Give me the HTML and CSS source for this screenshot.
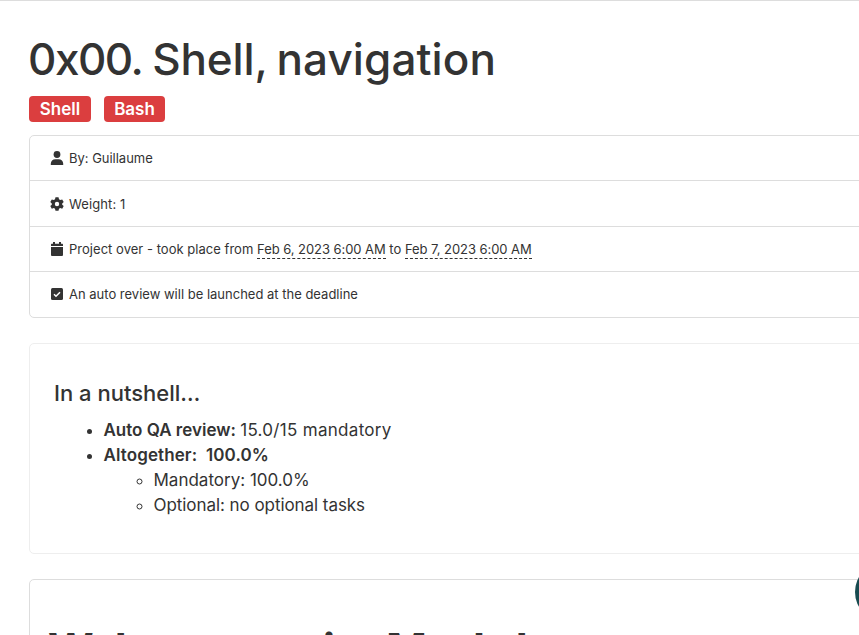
FILE: index.html
```html
<!DOCTYPE html>
<html lang="en">
<head>
<meta charset="utf-8">
<title>0x00. Shell, navigation</title>
<link rel="stylesheet" href="styles.css">
</head>
<body>
<main class="page">
  <h1 class="title"><span class="t1">0x00.</span> <span class="t2">Shell,</span> <span class="t3">navigation</span></h1>
  <div class="tags"><span class="tag tag-shell">Shell</span><span class="tag tag-bash">Bash</span></div>
  <ul class="meta">
    <li><svg viewBox="0 0 14 14"><circle cx="7" cy="3.5" r="3.4"/><path d="M.8 14v-1.200C.8 10 2.600 8.200 5.500 8.200h3c2.900 0 4.700 1.800 4.700 4.600V14z"/></svg><span class="m1">By: Guillaume</span></li>
    <li class="lower"><svg viewBox="0 0 14 14"><path fill-rule="evenodd" d="M5.500.3h3l.5 2 1.200.7 2-.6 1.500 2.600-1.500 1.400v1.300l1.500 1.400-1.500 2.600-2-.6-1.200.7-.5 2h-3l-.5-2-1.200-.7-2 .6L.3 9.100l1.500-1.400V6.400L.3 5l1.500-2.600 2 .6L5 2.300zM7 4.800a2.200 2.200 0 1 0 0 4.400 2.200 2.200 0 0 0 0-4.400z"/></svg><span class="m2">Weight: 1</span></li>
    <li><svg viewBox="0 0 14 14"><path d="M3 0h2v1.700h4V0h2v1.700h1c.7 0 1 .4 1 1V4H1V2.700c0-.6.300-1 1-1h1zM1 5h12v7.700c0 .7-.5 1.300-1.200 1.300H2.200C1.500 14 1 13.400 1 12.700z"/></svg><span class="m3">Project over - took place from <span class="date">Feb 6, 2023 6:00 AM</span> to <span class="date">Feb 7, 2023 6:00 AM</span></span></li>
    <li><svg viewBox="0 0 14 14"><rect x="1" y="0" width="12" height="12" rx="1.500"/><path class="tick" d="M4 6.200l2 2 4-4"/></svg><span class="m4">An auto review will be launched at the deadline</span></li>
  </ul>
  <section class="card summary">
    <h2>In a nutshell…</h2>
    <ul>
      <li><strong>Auto QA review:</strong> <span class="s2">15.0/15 mandatory</span></li>
      <li><strong class="s3">Altogether:&nbsp; 100.0%</strong>
        <ul>
          <li>Mandatory: 100.0%</li>
          <li><span class="s5">Optional: no optional tasks</span></li>
        </ul>
      </li>
    </ul>
  </section>
  <section class="card concepts"><h1><span class="c1">Welcome onsite</span> <span class="c2">Module</span></h1></section>
</main>
<div class="bubble"></div>
</body>
</html>
```
FILE: styles.css
```css
* { box-sizing: border-box; }
html, body { height: 100%; overflow: hidden; }
body { margin: 0; background: #fff; color: #333; font: 17px/25px Inter, "Liberation Sans", sans-serif; border-top: 1px solid #ddd; }
.page { width: 100%; height: 634px; overflow: hidden; padding: 33px 0 0 29px; }
.title { margin: 0 0 0 -1px; font-size: 44px; line-height: 50px; font-weight: 500; white-space: nowrap; }
.t1 { letter-spacing: -1.5px; }
.t2 { letter-spacing: -.1px; margin-left: -2px; }
.t3 { letter-spacing: .1px; margin-left: -3px; }
.tags { display: flex; gap: 13px; margin-top: 12px; }
.tag { height: 26px; border-radius: 4px; background: #db3e3f; color: #fff; font-size: 17px; line-height: 26px; font-weight: 600; text-align: center; }
.tag-shell { width: 62px; }
.tag-bash { width: 61px; }
.meta, .card { margin-right: -8px; }
.meta { list-style: none; margin-top: 13px; margin-bottom: 0; padding: 0; border: 1px solid #ddd; border-radius: 5px; height: 183px; display: grid; grid-template-rows: 45px 46px 45px 45px; font-size: 13px; }
.meta li { display: flex; align-items: center; padding-left: 20px; border-bottom: 1px solid #ddd; white-space: nowrap; }
.meta li.lower { padding-top: 1px; }
.meta li:last-child { border-bottom: 0; }
.meta svg { width: 14px; height: 14px; margin-right: 5px; fill: #333; }
.meta .tick { fill: none; stroke: #fff; stroke-width: 1.5; }
.m1 { letter-spacing: -.02px; }
.m2 { letter-spacing: .1px; }
.m3 { letter-spacing: .03px; }
.date { display: inline-block; line-height: 17px; letter-spacing: -.06px; border-bottom: 1px dashed #333; }
.card { border: 1px solid #eee; border-radius: 5px; }
.summary { margin-top: 25px; height: 211px; padding: 36px 24px; }
.summary h2 { margin: 0 0 12px; font-size: 22px; line-height: 26px; font-weight: 500; }
.summary ul { margin: 0; padding-left: 49.5px; }
.summary ul ul { padding-left: 50px; }
.summary strong { font-weight: 600; }
.s2 { letter-spacing: .3px; margin-left: -.5px; }
.s3 { letter-spacing: .1px; }
.s5 { letter-spacing: -.06px; }
.concepts { margin-top: 25px; height: 200px; border-color: #ddd; padding: 44px 18px; }
.concepts h1 { margin: 0; font-size: 44px; line-height: 50px; font-weight: 700; white-space: nowrap; }
.c1 { letter-spacing: -1.4px; }
.c2 { letter-spacing: 1.7px; margin-left: 3px; }
.bubble { position: fixed; left: 855px; top: 561px; width: 62px; height: 62px; border-radius: 50%; background: #174b50; }
```
